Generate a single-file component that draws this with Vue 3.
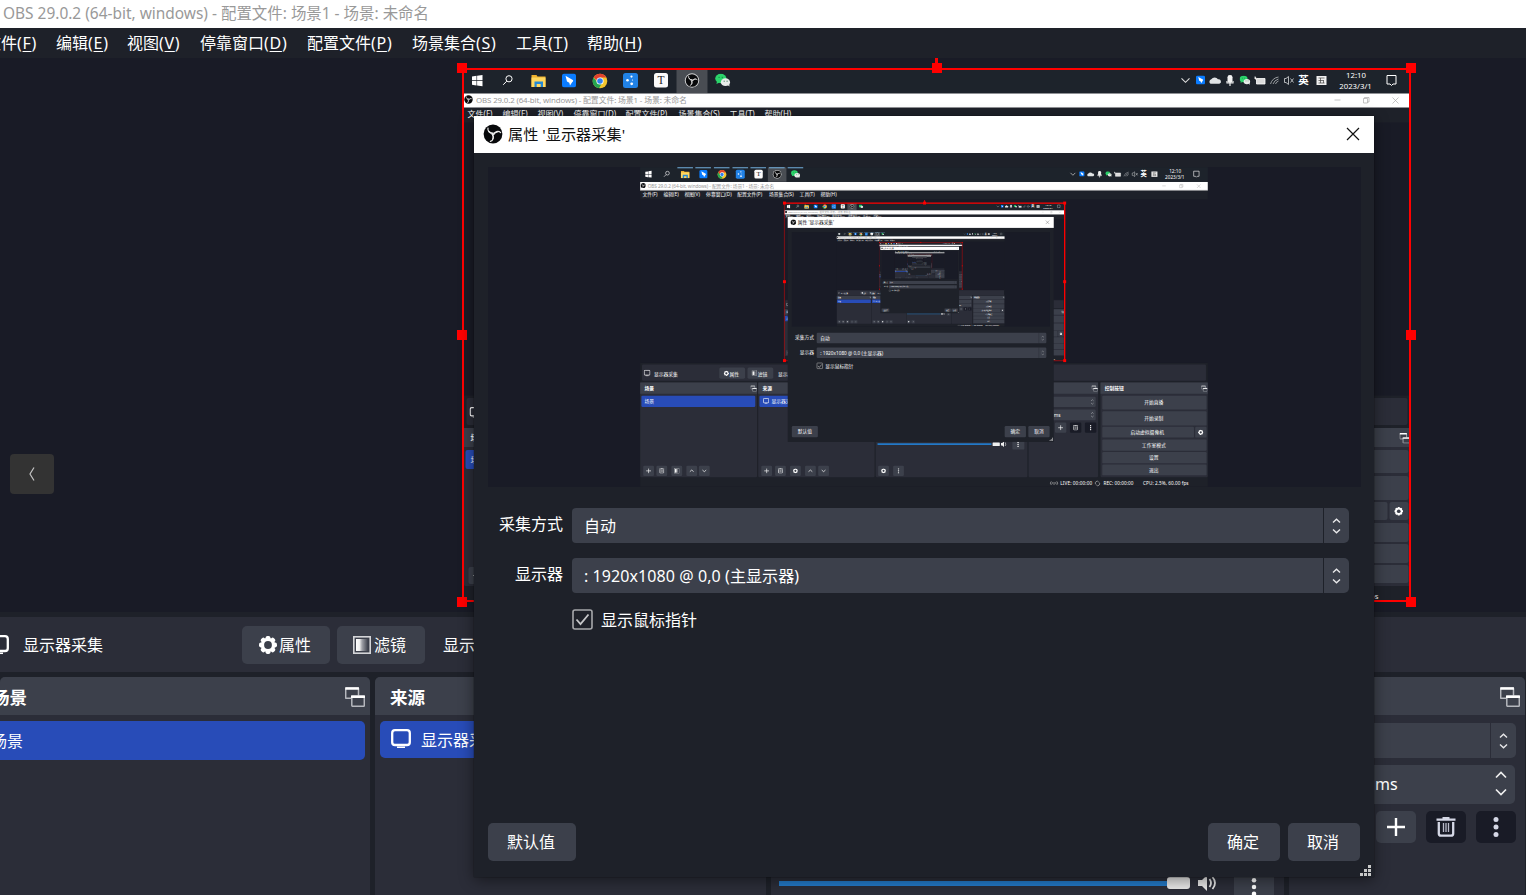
<script setup>
const menus = [
  { name: '文件', key: 'F', x: -15 },
  { name: '编辑', key: 'E', x: 56 },
  { name: '视图', key: 'V', x: 127 },
  { name: '停靠窗口', key: 'D', x: 200 },
  { name: '配置文件', key: 'P', x: 307 },
  { name: '场景集合', key: 'S', x: 412 },
  { name: '工具', key: 'T', x: 516 },
  { name: '帮助', key: 'H', x: 587 },
]
const menuWidths = menus.map((m, i) => (i < menus.length - 1 ? menus[i + 1].x - m.x : 80))
const miniMenuX = [4, 39, 74, 110, 162, 215, 266, 301]
const controls = [
  { y: 381, h: 23, t: '开始直播' },
  { y: 407, h: 24, t: '开始录制' },
  { y: 433, h: 18, t: '启动虚拟摄像机', short: true },
  { y: 454, h: 19, t: '工作室模式' },
  { y: 475, h: 19, t: '设置' },
  { y: 496, h: 18, t: '退出' },
]
const panels = [
  { x: 0, w: 195, t: '场景' },
  { x: 197, w: 194, t: '来源' },
  { x: 393, w: 253, t: '混音器' },
  { x: 648, w: 116, t: '转场动画' },
  { x: 768, w: 179, t: '控制按钮' },
]
const tools = [
  { x: 5, i: 'plus' }, { x: 27, i: 'trash' }, { x: 52, i: 'filter' }, { x: 77, i: 'up' }, { x: 98, i: 'down' },
  { x: 202, i: 'plus' }, { x: 225, i: 'trash' }, { x: 250, i: 'gear' }, { x: 275, i: 'up' }, { x: 297, i: 'down' },
  { x: 397, i: 'gear' }, { x: 422, i: 'dots' },
]
const handles = [[0, 0], [474, 0], [948, 0], [0, 266], [948, 266], [0, 533], [948, 533], [474, 533]]
</script>

<template>
  <div class="screen">
    <svg class="defs" width="0" height="0" aria-hidden="true">
      <defs>
        <symbol id="gear" viewBox="0 0 20 20">
          <g fill="currentColor">
            <rect v-for="a in 4" :key="a" x="7.6" y="1" width="4.8" height="18" rx="1.8" :transform="`rotate(${a * 45} 10 10)`" />
            <circle cx="10" cy="10" r="7.2" />
          </g>
          <circle cx="10" cy="10" r="3.9" fill="#3c404b" />
        </symbol>
        <symbol id="monitor" viewBox="0 0 20 20">
          <rect x="1.2" y="1.200" width="17.6" height="14.8" rx="2.800" fill="none" stroke="currentColor" stroke-width="2.3" />
          <path d="M6 18.3h8" stroke="currentColor" stroke-width="1.5" />
        </symbol>
        <linearGradient id="fade">
          <stop offset="0" stop-color="#fff" /><stop offset=".3" stop-color="#eee" /><stop offset=".5" stop-color="#a0a2a8" /><stop offset="1" stop-color="#3c404b" />
        </linearGradient>
        <symbol id="filter" viewBox="0 0 18 18">
          <rect x=".8" y=".8" width="16.4" height="16.4" fill="none" stroke="#d4d5d8" stroke-width="1.6" />
          <rect x="3" y="3" width="12" height="12" fill="url(#fade)" />
        </symbol>
        <symbol id="float" viewBox="0 0 20 20">
          <rect x=".7" y="1" width="12.8" height="10.300" rx=".6" fill="none" stroke="#b5b7bd" stroke-width="1.5" />
          <path d="M.3 1.500h13.600" stroke="#fff" stroke-width="2.6" />
          <rect x="6.8" y="9" width="12.5" height="10.2" rx=".6" fill="#3c404b" stroke="#b5b7bd" stroke-width="1.5" />
          <path d="M6 9.700h14" stroke="#fff" stroke-width="2.6" />
        </symbol>
        <symbol id="plus" viewBox="0 0 20 20"><path d="M10 1v18M1 10h18" stroke="currentColor" stroke-width="2.4" /></symbol>
        <symbol id="trash" viewBox="0 0 20 20">
          <path d="M.5 2.6h19M6.5 1.1h7M2.8 5v11.4q0 2.2 2.2 2.2h10q2.2 0 2.2-2.2V5" fill="none" stroke="currentColor" stroke-width="2.3" />
          <path d="M7.5 6v9M10 6v9M12.5 6v9" stroke="currentColor" stroke-width="1.3" opacity=".85" />
        </symbol>
        <symbol id="dots" viewBox="0 0 20 20">
          <g fill="currentColor"><circle cx="10" cy="2.5" r="2.5" /><circle cx="10" cy="10" r="2.5" /><circle cx="10" cy="17.5" r="2.5" /></g>
        </symbol>
        <symbol id="up" viewBox="0 0 20 20"><path d="M3 13l7-6 7 6" fill="none" stroke="currentColor" stroke-width="2.6" /></symbol>
        <symbol id="down" viewBox="0 0 20 20"><path d="M3 7l7 6 7-6" fill="none" stroke="currentColor" stroke-width="2.6" /></symbol>
        <symbol id="updown" viewBox="0 0 9 16"><path d="M1 4.5L4.5 1.2 8 4.5M1 11.5l3.5 3.3L8 11.5" fill="none" stroke="#e8e8ea" stroke-width="1.4" /></symbol>
        <symbol id="obs" viewBox="0 0 20 20">
          <circle cx="10" cy="10" r="9.4" fill="#08090b" />
          <g v-for="a in 3" :key="a" :transform="`rotate(${a * 120 - 20} 10 10)`">
            <path d="M10.500 9.300A4.300 4.300 0 0 1 7.300 2.700" fill="none" stroke="#ececec" stroke-width="1.200" stroke-linecap="round" />
            <path d="M10.500 9.300Q7.800 8.600 6.800 5.500" fill="none" stroke="#ececec" stroke-width="1" stroke-linecap="round" />
          </g>
        </symbol>
        <symbol id="wechat" viewBox="0 0 16 14">
          <ellipse cx="6" cy="5.2" rx="5.8" ry="4.9" fill="#2bd46b" /><path d="M2 8l-.5 3L5 9" fill="#2bd46b" />
          <ellipse cx="10.8" cy="9" rx="4.8" ry="4" fill="#e8ece9" /><path d="M13 12l2 1.5-.3-3" fill="#e8ece9" />
          <path d="M3.7 4h1M7 4h1M9 8h1M12 8h1" stroke="#17693a" stroke-width="1" />
        </symbol>
        <symbol id="bird" viewBox="0 0 14 14">
          <rect width="14" height="14" rx="2.5" fill="#0a7cff" />
          <path d="M3.5 2.2l7.3 4.2c.8.5.2 1.6-.5 2.1L8 12 7.3 9.2 5 8z" fill="#fff" />
        </symbol>

        <!-- desktop mirror, 947 x 533 units -->
        <g id="desk">
          <rect width="947" height="533" fill="#1e2129" />
          <rect width="947" height="24.5" fill="#1d232b" />
          <rect x="213" width="31" height="24" fill="#494d53" />
          <path d="M8.500 7.500l4.500-.7v4.500H8.500zM13.600 6.700l5.400-.8v5.400h-5.400zM8.500 12H13v4.400l-4.500-.6zM13.600 12H19v5.200l-5.400-.8z" fill="#fff" />
          <g fill="none" stroke="#fff" stroke-width="1"><circle cx="45.500" cy="9.800" r="3.100" /><path d="M43.200 12.200l-3.500 3.600" /></g>
          <path d="M68 6h5l1 1.500h8V18H68z" fill="#f0b22e" /><path d="M68 8.500h14V18H68z" fill="#ffd75f" /><path d="M71 18v-5.500h8.500V18h-2.300v-3h-4v3z" fill="#2489d6" />
          <use href="#bird" x="98.500" y="4.500" width="14" height="14" />
          <circle cx="136.500" cy="12" r="7.300" fill="#f4c52d" />
          <path d="M130.200 8.200a7.300 7.300 0 0 1 12.700.3h-6.400l-3 3.600z" fill="#e3402e" />
          <path d="M130 8.400a7.300 7.300 0 0 0 5.600 10.900l3-5.500-4.800-.7z" fill="#25a550" />
          <circle cx="136.500" cy="12" r="3.600" fill="#fff" /><circle cx="136.500" cy="12" r="2.800" fill="#3180ee" />
          <rect x="159.500" y="4" width="15" height="15" rx="2.500" fill="#2182e6" />
          <g fill="#fff"><circle cx="168" cy="7.600" r="1.100" /><circle cx="164" cy="11.300" r="1.300" /><circle cx="168.200" cy="14.800" r="1.400" /><circle cx="169" cy="11" r=".6" /></g>
          <rect x="190.500" y="4" width="14" height="14.500" rx="2.500" fill="#fbfbfb" />
          <text x="197.500" y="15.300" text-anchor="middle" class="m-serif">T</text>
          <circle cx="228.500" cy="11.500" r="7.200" fill="#d0d1d2" /><use href="#obs" x="221.800" y="4.800" width="13.400" height="13.400" />
          <use href="#wechat" x="251.500" y="4.500" width="15.500" height="13.500" />
          <path d="M718 9.300l4 4 4-4" fill="none" stroke="#ddd" stroke-width="1.100" />
          <use href="#bird" x="732.500" y="6.500" width="9" height="9" />
          <path d="M747 14.800a2.500 2.500 0 0 1 .8-4.500 4 4 0 0 1 6.700 0 2.300 2.300 0 0 1 1.300 4.500z" fill="#e1e4e5" />
          <rect x="764" y="6" width="5" height="8" rx="2.300" fill="#f2f2f2" /><path d="M763.500 12v2h6v-2M766.500 14v3" fill="none" stroke="#eee" stroke-width="1.200" />
          <use href="#wechat" x="776" y="6.500" width="11" height="9.500" />
          <path d="M791.500 7.500v2.500h1.500v5h8.500V9.500h-8" fill="#dcdcdc" stroke="#fff" stroke-width=".8" />
          <path d="M807 15a10 10 0 0 1 8-7M809.500 15a8 8 0 0 1 5.500-5M812 15a5 5 0 0 1 3-3" fill="none" stroke="#a6aaad" stroke-width=".9" />
          <path d="M821 9.500h1.500l2.500-2v8l-2.500-2H821zM827 9.500l3 4M830 9.500l-3 4" fill="none" stroke="#c3c6c8" stroke-width=".9" />
          <text x="840" y="14.700" text-anchor="middle" class="m-ime">英</text>
          <rect x="853" y="7" width="10" height="9" fill="#f0f0f0" /><path d="M855 9h6M857 9v5M855 14h6M860 11v3M855 11.500h5" stroke="#444" stroke-width=".7" />
          <text x="892.500" y="9" text-anchor="middle" class="m-clock">12:10</text>
          <text x="892" y="20" text-anchor="middle" class="m-clock">2023/3/1</text>
          <path d="M923.500 6.500h9v8.500h-3l-1.500 1.500-1.500-1.500h-3z" fill="none" stroke="#fff" />
          <rect x="0" y="24.500" width="947" height="14" fill="#fff" />
          <use href="#obs" x="0.500" y="26" width="9" height="9" />
          <text x="12.500" y="33.800" class="m-title" textLength="211">OBS 29.0.2 (64-bit, windows) - 配置文件: 场景1 - 场景: 未命名</text>
          <path d="M871 31h6M900 29.500h4v4.500h-4zM901 29.500v-1h4.500v4.500H904M929 28.500l6 6M935 28.500l-6 6" fill="none" stroke="#aaa" stroke-width=".7" />
          <text v-for="(m, i) in menus" :key="m.key" :x="miniMenuX[i]" y="48" class="m-menu">{{ m.name }}({{ m.key }})</text>
          <rect y="53.500" width="947" height="273" fill="#191b26" />
          <rect x="3" y="329" width="941" height="27" rx="2" fill="#2b2d38" />
          <use href="#monitor" x="6" y="338" width="11" height="11" class="ink" />
          <text x="23" y="347.500" class="m-text">显示器采集</text>
          <rect x="132" y="334" width="43" height="19" rx="2.500" fill="#3c404b" /><use href="#gear" x="139" y="339" width="9.500" height="9.500" class="ink" />
          <text x="149" y="347.500" class="m-text">属性</text>
          <rect x="179" y="334" width="43" height="19" rx="2.500" fill="#3c404b" /><use href="#filter" x="186" y="339" width="9" height="9" />
          <text x="196" y="347.500" class="m-text">滤镜</text><text x="230" y="347.500" class="m-text">显示器</text>
          <g v-for="p in panels" :key="p.x">
            <rect :x="p.x" y="359" :width="p.w" height="158" rx="2" fill="#2b2d38" />
            <path :d="`M${p.x} 359h${p.w}v19h-${p.w}z`" fill="#3c404b" />
            <text :x="p.x + 7" y="372" class="m-text m-bold">{{ p.t }}</text>
            <use href="#float" :x="p.x + p.w - 11" y="364" width="10.500" height="10.500" />
          </g>
          <rect x="2" y="381" width="190" height="19" rx="2" fill="#284cb8" /><text x="7" y="394" class="m-text">场景</text>
          <rect x="199" y="381" width="189" height="19" rx="2" fill="#284cb8" /><use href="#monitor" x="205" y="385" width="10" height="10" class="ink" />
          <text x="219" y="394" class="m-text">显示器采集</text>
          <g v-for="t in tools" :key="t.x">
            <rect :x="t.x" y="498" width="18" height="17" rx="2" fill="#3c404b" />
            <use :href="`#${t.i}`" :x="t.x + 4.5" y="502" width="9" height="9" class="ink" />
          </g>
          <path d="M396 462h190" stroke="#2379c7" stroke-width="3" /><rect x="588" y="459" width="12" height="6" rx="1" fill="#eee" />
          <path d="M602 460h2l3-2.500v9l-3-2.500h-2z" fill="#eee" /><path d="M609 459q2 3 0 6" fill="none" stroke="#eee" />
          <rect x="621" y="454" width="20" height="17" rx="2" fill="#3c404b" /><use href="#dots" x="626" y="458" width="9" height="9" class="ink" />
          <rect x="652" y="383" width="108" height="17" rx="2" fill="#3c404b" /><use href="#updown" x="752" y="387" width="5" height="9" />
          <rect x="652" y="404" width="108" height="18" rx="2" fill="#3c404b" /><text x="690" y="416" class="m-text">ms</text><use href="#updown" x="752" y="408" width="5" height="10" />
          <rect x="692" y="426" width="19" height="17" rx="2" fill="#3c404b" /><use href="#plus" x="697" y="430" width="9" height="9" class="ink" />
          <rect x="717" y="426" width="19" height="17" rx="2" fill="#191b26" /><use href="#trash" x="722" y="430" width="9" height="9" class="ink" />
          <rect x="742" y="426" width="19" height="17" rx="2" fill="#191b26" /><use href="#dots" x="747" y="430" width="9" height="9" class="ink" />
          <g v-for="c in controls" :key="c.t">
            <rect x="771" :y="c.y" :width="c.short ? 153 : 174" :height="c.h" rx="2" fill="#3c404b" />
            <text :x="c.short ? 846 : 857" :y="c.y + c.h / 2 + 3" text-anchor="middle" class="m-text">{{ c.t }}</text>
          </g>
          <rect x="926" y="433" width="19" height="18" rx="2" fill="#3c404b" /><use href="#gear" x="930.500" y="437.500" width="9.500" height="9.500" class="ink" />
          <path d="M686 524a4 4 0 0 0 0 6M695 524a4 4 0 0 1 0 6M688 525.500a2 2 0 0 0 0 3M693 525.500a2 2 0 0 1 0 3M690.500 525v5M760 529a3 3 0 0 1 5-4M766 526a3 3 0 0 1-5 4" fill="none" stroke="#aaa" stroke-width="1.200" />
          <text x="701" y="530" class="m-status" textLength="53">LIVE: 00:00:00</text>
          <text x="773" y="530" class="m-status" textLength="50">REC: 00:00:00</text>
          <text x="839" y="530" class="m-status" textLength="76">CPU: 2.5%, 60.00 fps</text>
        </g>
        <g id="running">
          <rect v-for="x in [75, 105, 136, 167, 197, 228, 259]" :key="x" :x="x - 13" width="26" height="1.6" fill="#77b7e5" />
          <path d="M0 38.500h947" stroke="#9a9a9a" />
        </g>

        <!-- properties dialog mirror, 900 x 761 units -->
        <g id="dlg">
          <rect width="900" height="761" fill="#1e2129" /><rect width="900" height="37" fill="#fff" />
          <use href="#obs" x="9" y="8" width="20" height="20" /><text x="34" y="24" class="d-text dark">属性 '显示器采集'</text>
          <path d="M873 12l12 12M885 12l-12 12" stroke="#222" />
          <rect x="14" y="51" width="873" height="320" fill="#191b26" />
          <g v-for="(r, i) in [392, 442]" :key="r">
            <rect x="98" :y="r" width="777" height="35" rx="4" fill="#3c404b" />
            <path :d="`M849.500 ${r}v35`" stroke="#1e2129" />
            <use href="#updown" x="858" :y="r + 10" width="9" height="16" />
            <text x="89" :y="r + 22" text-anchor="end" class="d-text">{{ i ? '显示器' : '采集方式' }}</text>
            <text x="110" :y="r + 24" class="d-text">{{ i ? ': 1920x1080 @ 0,0 (主显示器)' : '自动' }}</text>
          </g>
          <rect x="99" y="494" width="19" height="19" rx="2" fill="none" stroke="#aaa" stroke-width="2" /><path d="M103 504l4 5 8-10" stroke="#ccc" stroke-width="2" fill="none" />
          <text x="127" y="510" class="d-text">显示鼠标指针</text>
          <g fill="#3c404b"><rect x="14" y="707" width="88" height="38" rx="4" /><rect x="734" y="707" width="72" height="38" rx="4" /><rect x="814" y="707" width="72" height="38" rx="4" /></g>
          <text x="58" y="732" text-anchor="middle" class="d-text">默认值</text><text x="770" y="732" text-anchor="middle" class="d-text">确定</text><text x="850" y="732" text-anchor="middle" class="d-text">取消</text>
          <path d="M886 758h3v-3h-3zM890 758h3v-3h-3zM894 758h3v-3h-3zM890 754h3v-3h-3zM894 754h3v-3h-3zM894 750h3v-3h-3z" fill="#ccc" />
        </g>
        <g id="frame">
          <path d="M0 0H948V533" fill="none" stroke="#f00" stroke-width="4.500" />
          <path d="M0 0V533H948" fill="none" stroke="#f00" stroke-width="4" stroke-opacity=".4" />
          <rect v-for="(h, i) in handles" :key="i" :x="h[0] - 5" :y="h[1] - 5" width="10" height="10" fill="#f00" />
          <path d="M474-10v12" stroke="#f00" stroke-width="3" />
        </g>

        <!-- each level is a 1920 x 1080 desktop that shows the level before it -->
        <g id="level0"><use href="#desk" transform="scale(2.0275)" /></g>
        <g v-for="n in 4" :id="`level${n}`" :key="n">
          <use href="#desk" transform="scale(2.0275)" />
          <use href="#running" transform="scale(2.0275)" />
          <use href="#desk" transform="translate(488 121)" />
          <use href="#frame" transform="translate(488 121)" />
          <use href="#dlg" transform="translate(499 168)" />
          <use :href="`#level${n - 1}`" transform="translate(665 219) scale(.2956)" />
        </g>
      </defs>
    </svg>

    <header class="titlebar">OBS 29.0.2 (64-bit, windows) - 配置文件: 场景1 - 场景: 未命名</header>
    <nav class="menubar">
      <span v-for="(m, i) in menus" :key="m.key" class="menu" :style="{ width: menuWidths[i] + 'px' }">{{ m.name }}<i>(<u>{{ m.key }}</u>)</i></span>
    </nav>
    <main class="canvas">
      <svg width="1526" height="554" viewBox="0 58 1526 554">
        <use href="#desk" transform="translate(463.500 69)" />
        <path d="M463 69H1410V601H463V68" fill="none" stroke="#f00" stroke-width="2" />
        <path d="M936.500 58v10" stroke="#f00" stroke-width="3" />
        <rect v-for="(h, i) in handles" :key="i" :x="457 + h[0] + (h[0] > 0 ? 1 : 0)" :y="63 + h[1] + (h[1] > 0 ? 1 : 0)" width="10" height="10" fill="#f00" />
      </svg>
      <button class="back"><svg width="10" height="18" viewBox="0 0 10 18"><path d="M7 2.500L3 9l4 6.500" fill="none" stroke="#c4c4c4" stroke-width="1.200" /></svg></button>
    </main>

    <section class="context">
      <svg class="c-mon" width="20" height="20"><use href="#monitor" /></svg>
      <span class="c-name">显示器采集</span>
      <button class="btn c-btn"><svg width="20" height="20"><use href="#gear" /></svg>属性</button>
      <button class="btn c-btn"><svg width="18" height="18"><use href="#filter" /></svg><span class="fl">滤镜</span></button>
      <span class="c-more">显示器</span>
    </section>

    <section class="docks">
      <div class="dock scenes">
        <h2>场景<svg width="20" height="20"><use href="#float" /></svg></h2>
        <div class="item">场景</div>
      </div>
      <div class="dock">
        <h2>来源</h2>
        <div class="item"><svg width="20" height="20"><use href="#monitor" /></svg>显示器采集</div>
      </div>
      <div class="dock mixer">
        <div class="volume">
          <span class="track"></span><span class="knob"></span>
          <svg class="spk" width="22" height="18" viewBox="0 0 22 18"><path d="M1 6h4l5-5v16l-5-5H1z" fill="#e8e8e8" /><path d="M12.500 5q3 4 0 8M15.500 3q5 6 0 12" fill="none" stroke="#e8e8e8" stroke-width="1.800" /></svg>
          <span class="more"><svg width="18" height="20"><use href="#dots" /></svg></span>
        </div>
      </div>
      <div class="dock trans">
        <h2><svg width="20" height="20"><use href="#float" /></svg></h2>
        <div class="select"><span></span><b><svg width="9" height="16"><use href="#updown" /></svg></b></div>
        <div class="spin">ms<svg width="12" height="26" viewBox="0 0 12 26"><path d="M1 6.500L6 1.500l5 5M1 18.500l5 5 5-5" fill="none" stroke="#eee" stroke-width="1.700" /></svg></div>
        <div class="acts">
          <span class="btn"><svg width="20" height="20"><use href="#plus" /></svg></span>
          <span class="btn off"><svg width="20" height="20"><use href="#trash" /></svg></span>
          <span class="btn off"><svg width="20" height="20"><use href="#dots" /></svg></span>
        </div>
      </div>
    </section>

    <div class="dialog">
      <header>
        <svg width="20" height="20"><use href="#obs" /></svg><span class="caption">属性 '显示器采集'</span>
        <svg class="close" width="14" height="14" viewBox="0 0 14 14"><path d="M1 1l12 12M13 1L1 13" stroke="#111" stroke-width="1.200" /></svg>
      </header>
      <svg class="preview" width="873" height="320" viewBox="0 0 873 320">
        <use href="#level4" transform="translate(152.200 .3) scale(.2956)" />
      </svg>
      <div class="form">
        <label>采集方式</label>
        <div class="select"><span>自动</span><b><svg width="9" height="16"><use href="#updown" /></svg></b></div>
        <label>显示器</label>
        <div class="select"><span class="res">: 1920x1080 @ 0,0 (主显示器)</span><b><svg width="9" height="16"><use href="#updown" /></svg></b></div>
      </div>
      <div class="check">
        <svg width="21" height="21" viewBox="0 0 21 21"><rect x="1" y="1" width="19" height="19" rx="2" fill="none" stroke="#a7a8ab" stroke-width="1.600" /><path d="M4.500 10.500l4 4.500 8-9.500" fill="none" stroke="#c6c7c9" stroke-width="1.800" /></svg>
        显示鼠标指针
      </div>
      <footer>
        <button class="btn wide">默认值</button><button class="btn ok">确定</button><button class="btn">取消</button>
      </footer>
      <svg class="grip" width="11" height="11" viewBox="0 0 11 11"><path d="M0 8h3v3H0zM4 8h3v3H4zM8 8h3v3H8zM4 4h3v3H4zM8 4h3v3H8zM8 0h3v3H8z" fill="#c8c8c8" /></svg>
    </div>
  </div>
</template>

<style>
body { margin: 0; overflow: hidden; }
</style>

<style scoped>
.screen { position: relative; width: 1526px; height: 895px; overflow: hidden; background: #1e2129; color: #fff; font: 16px/20px "Noto Sans", "Noto Sans CJK SC", sans-serif; display: flex; flex-direction: column; white-space: nowrap; }
.screen * { box-sizing: border-box; }
svg { display: block; flex: none; }
.defs { position: absolute; }
.ink { color: #fff; }
.m-serif { font: 11.5px "Liberation Serif", serif; fill: #222; }
.m-ime { font: bold 10.5px "Noto Sans CJK SC", sans-serif; fill: #fff; }
.m-clock { font: 7.8px "Noto Sans", sans-serif; fill: #fff; }
.m-title { font: 7.9px "Noto Sans", "Noto Sans CJK SC", sans-serif; fill: #999; }
.m-menu, .m-text { font: 8px "Noto Sans", "Noto Sans CJK SC", sans-serif; fill: #fff; }
.m-bold { font-weight: 700; }
.m-status { font: 7.8px "Noto Sans", sans-serif; fill: #fff; }
.d-text { font: 16px "Noto Sans", "Noto Sans CJK SC", sans-serif; fill: #fff; }
.d-text.dark { fill: #111; }
button { border: 0; padding: 0; color: #fff; font: inherit; }
.titlebar { height: 28px; background: #fff; color: #999; padding: 3px 0 0 3px; font-size: 15.450px; }
.menubar { height: 30px; flex: none; display: flex; padding-top: 5px; margin-left: -15px; }
.menu { flex: none; }
.menu i { font-style: normal; letter-spacing: .7px; }
.menu u { text-underline-offset: 2px; text-decoration-thickness: 1px; }
.canvas { position: relative; height: 554px; flex: none; background: #191b26; }
.back { position: absolute; left: 10px; top: 396px; width: 44px; height: 40px; background: #333; border-radius: 4px; display: flex; align-items: center; justify-content: center; }
.context { height: 55px; flex: none; margin-top: 5px; background: #2b2d38; display: flex; align-items: center; }
.c-mon { margin-left: -11px; }
.c-name { width: 219px; padding-left: 14px; }
.btn { background: #3c404b; border-radius: 5px; display: flex; align-items: center; justify-content: center; }
.c-btn { width: 88px; height: 38px; margin-left: 14px; gap: 1px; padding-right: 3px; }
.c-btn + .c-btn { margin-left: 7px; }
.fl { padding-left: 2px; }
.c-more { margin-left: 18px; }
.docks { display: grid; grid-template-columns: 370px 391px 513px 236px; gap: 5px; margin-top: 5px; height: 218px; }
.dock { background: #2b2d38; border-radius: 5px 5px 0 0; overflow: hidden; }
.dock h2 { margin: 0; height: 38px; background: #3c404b; font-size: 17.500px; line-height: 38px; font-weight: 700; padding: 1px 5px 0 15px; display: flex; align-items: center; justify-content: space-between; }
.dock h2 svg { margin-top: 1px; }
.scenes h2 { padding-left: 0; text-indent: -8px; }
.item { height: 37px; margin: 6px 5px; background: #284cb8; border-radius: 5px; display: flex; align-items: center; gap: 10px; padding: 0 0 0 11px; }
.item svg { margin-top: -1px; }
.scenes .item { margin-left: 0; padding-left: 0; text-indent: -9px; height: 39px; border-radius: 0 5px 5px 0; }
.mixer { display: flex; align-items: flex-end; }
.volume { display: flex; align-items: center; height: 24px; padding-left: 8px; }
.track { width: 388px; height: 5px; background: #2379c7; }
.knob { width: 23px; height: 12px; border-radius: 3px; background: #e8e8e8; }
.spk { margin-left: 7px; }
.more { width: 40px; height: 34px; margin-left: 15px; border-radius: 4px; background: #3c404b; display: flex; align-items: center; justify-content: center; padding-top: 7px; }
.trans h2 { justify-content: flex-end; }
.select { display: flex; height: 35px; gap: 1px; line-height: 36px; }
.select span { flex: 1; background: #3c404b; border-radius: 4px 0 0 4px; padding-left: 12px; }
.select .res { letter-spacing: .08px; }
.select b { width: 25px; background: #3c404b; border-radius: 0 5px 5px 0; display: flex; align-items: center; justify-content: center; }
.trans .select { margin: 8px 9px 0 0; }
.spin { height: 39px; background: #3c404b; border-radius: 5px; margin: 7px 10px 0 0; padding: 0 8px 2px 86px; display: flex; align-items: center; justify-content: space-between; }
.acts { display: flex; justify-content: flex-end; gap: 10px; margin: 7px 9px 0 0; }
.acts .btn { width: 40px; height: 32px; }
.acts .off { background: #191b26; color: #d5d8e6; }
.dialog { position: absolute; left: 474px; top: 116px; width: 900px; height: 761px; background: #1e2129; box-shadow: 0 3px 14px rgba(0, 0, 0, .45), 0 0 1px #111; }
.dialog header { height: 37px; background: #fff; color: #111; display: flex; align-items: center; padding: 0 14px 2px 9px; gap: 5px; }
.caption { font-size: 15.200px; }
.close { margin-left: auto; }
.preview { margin: 14px 0 0 14px; background: #191b26; }
.form { display: grid; grid-template-columns: 89px 777px; column-gap: 9px; row-gap: 15px; margin-top: 21px; }
.form label { text-align: right; line-height: 32px; }
.check { display: flex; align-items: center; gap: 8px; margin: 16px 0 0 98px; height: 21px; }
.dialog footer { display: flex; gap: 8px; padding: 0 14px; margin-top: 193px; }
.dialog footer .btn { width: 72px; height: 38px; padding-right: 2px; }
.dialog footer .wide { width: 88px; margin-right: auto; }
.grip { position: absolute; right: 3px; bottom: 1px; }
</style>
